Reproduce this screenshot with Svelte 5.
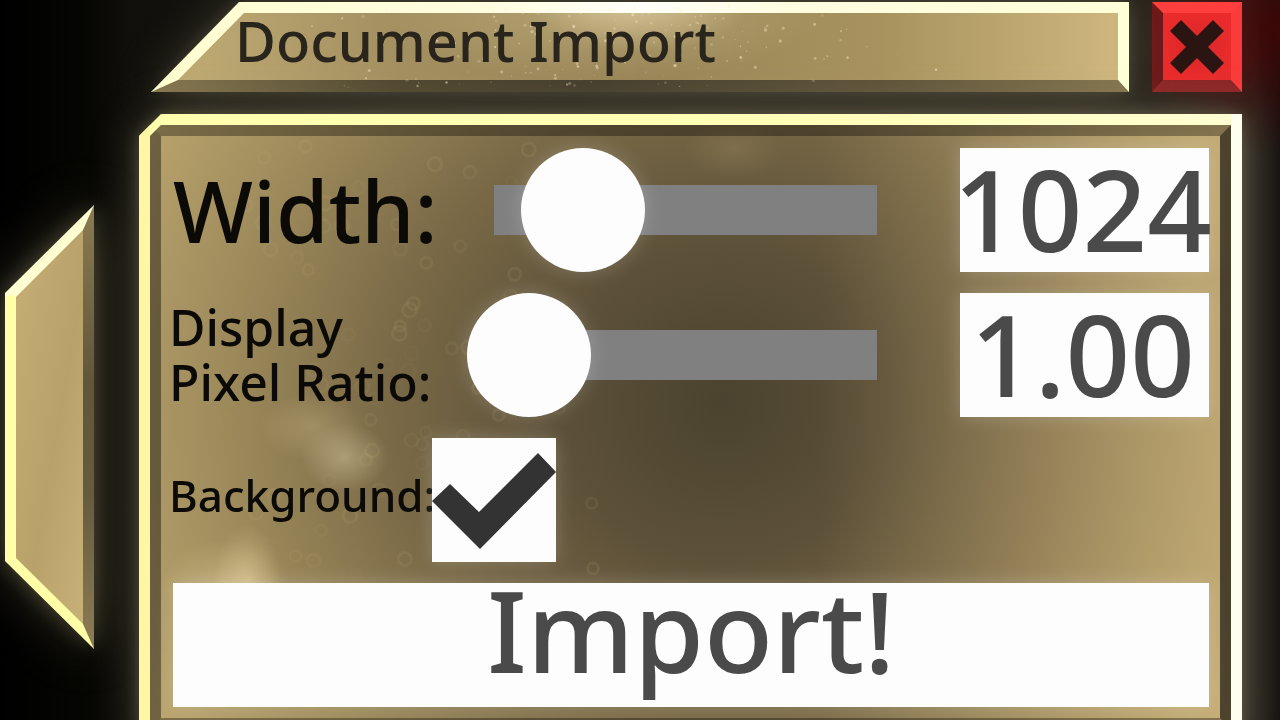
<script>
  let width = $state(1024);
  let ratio = $state(1);
  let background = $state(true);

  // Small repeatable random source, so that the texture is the same on each load.
  function scatter(seed, count, make) {
    let s = seed;
    const next = () => {
      s = (s * 16807) % 2147483647;
      return s / 2147483647;
    };
    return Array.from({ length: count }, () => make(next));
  }

  const sparks = scatter(4711, 170, (r) => ({
    x: 8 + (r() + r() + r()) * 26,
    y: 4 + r() * 92,
    size: 0.5 + r() * 1.2,
    alpha: 0.1 + r() * 0.45
  }));

  const rings = scatter(90210, 90, (r) => ({
    x: 1 + (r() + r()) * 22,
    y: 1 + r() * 92,
    size: 5 + r() * 2,
    alpha: 0.02 + r() * 0.07
  }));
</script>

<main class="stage">
  <button class="tab" type="button" aria-label="Previous panel">
    <span class="tab-shade"></span>
    <span class="tab-low"></span>
    <span class="tab-face"></span>
  </button>

  <div class="window">
    <header class="head">
      <div class="title-glow">
        <div class="title">
          <div class="title-shade"></div>
          <div class="title-face"></div>
          <svg class="sparks" aria-hidden="true">
            {#each sparks as p}
              <circle cx="{p.x}%" cy="{p.y}%" r={p.size} fill="#fff3cf" fill-opacity={p.alpha} />
            {/each}
          </svg>
          <h1>Document Import</h1>
        </div>
      </div>
      <button class="close" type="button" aria-label="Close">
        <svg viewBox="0 0 54 54" width="54" height="54" aria-hidden="true">
          <path d="M11 0 27 16 43 0 54 11 38 27 54 43 43 54 27 38 11 54 0 43 16 27 0 11Z" />
        </svg>
      </button>
    </header>

    <div class="panel-glow">
      <div class="panel">
        <div class="well">
          <svg class="rings" aria-hidden="true">
            {#each rings as p}
              <circle cx="{p.x}%" cy="{p.y}%" r={p.size} fill="none" stroke="#e6d49a" stroke-width="3" stroke-opacity={p.alpha} />
            {/each}
          </svg>
          <form class="form" onsubmit={(e) => e.preventDefault()}>
            <div class="row">
              <label class="large" for="width">Width:</label>
              <input id="width" class="slider" type="range" min="100" max="4096" bind:value={width} />
              <div class="value">
                <input type="text" aria-label="Width value" value={width} onchange={(e) => (width = Number(e.currentTarget.value) || width)} />
              </div>
            </div>
            <div class="row">
              <label class="medium" for="ratio">Display<br />Pixel Ratio:</label>
              <input id="ratio" class="slider" type="range" min="0.1" max="10" step="0.01" bind:value={ratio} />
              <div class="value">
                <input type="text" aria-label="Display pixel ratio value" value={ratio.toFixed(2)} onchange={(e) => (ratio = Number(e.currentTarget.value) || ratio)} />
              </div>
            </div>
            <div class="row">
              <label class="small" for="background">Background:</label>
              <div class="check">
                <input id="background" type="checkbox" bind:checked={background} />
                {#if background}
                  <svg viewBox="0 0 124 124" aria-hidden="true">
                    <path d="M0 63 18 46 47 74 106 15 124 34 48 111Z" />
                  </svg>
                {/if}
              </div>
            </div>
            <button class="submit" type="submit">Import!</button>
          </form>
        </div>
      </div>
    </div>
  </div>
</main>

<style>
  :global(body) {
    margin: 0;
    background: #000;
  }

  .stage {
    box-sizing: border-box;
    height: 100vh;
    overflow: auto;
    scrollbar-width: none;
    display: grid;
    grid-template-columns: 89px minmax(0, 1fr);
    align-items: start;
    column-gap: 45px;
    padding: 2px 38px 0 5px;
    font-family: "Noto Sans", sans-serif;
    font-weight: 500;
    background:
      radial-gradient(circle at 100% 4%, #3c0707 0, transparent 130px),
      linear-gradient(to right, #000 0, #060603 7%, #100f0b 10%, #1c1a15 30%, #25221c 90%, #2b2822 98%, #161310 100%);
  }

  button {
    font: inherit;
    border: 0;
    padding: 0;
    cursor: pointer;
  }

  /* Side tab */
  .tab {
    display: grid;
    height: 444px;
    margin-top: 203px;
    background: none;
    filter: drop-shadow(0 0 10px #c9bf8a44) drop-shadow(0 0 28px #c9bf8a44);
  }

  .tab > span {
    grid-area: 1 / 1;
  }

  .tab-shade {
    background: linear-gradient(to bottom, #ffffd2 0 90px, #ffffa8 91px);
    clip-path: polygon(0 88px, 100% 0, 100% 100%, 0 calc(100% - 88px));
  }

  .tab-low {
    background: linear-gradient(#8b7b52, #62563a 40%, #675b3e 65%, #8d7d54);
    clip-path: polygon(100% 0, 100% 100%, 78px calc(100% - 25px), 78px 25px);
  }

  .tab-face {
    background: linear-gradient(100deg, #c9b179, #b8a26a 55%, #cbb57b);
    clip-path: polygon(11px 92px, 78px 25px, 78px calc(100% - 25px), 11px calc(100% - 91px));
  }

  /* Title bar */
  .window {
    display: grid;
    row-gap: 22px;
  }

  .head {
    display: flex;
    gap: 23px;
    margin-left: 12px;
    height: 90px;
  }

  .title-glow {
    flex: 1;
    display: grid;
    filter: drop-shadow(0 0 8px #d8cf9c22) drop-shadow(0 0 24px #d8cf9c33);
  }

  .title {
    display: grid;
    grid-template-rows: 90px;
    background: linear-gradient(to right, #ffffd0, #fffce0 35%, #fffffa 50%, #fffde0 65%, #ffffd8);
    clip-path: polygon(88px 0, 100% 0, 100% 100%, 0 100%);
  }

  .title > * {
    grid-area: 1 / 1;
  }

  .title-shade {
    background: linear-gradient(to right, #857750, #50472f 25%, #453e2e 45%, #5f543a 75%, #83754f);
    clip-path: polygon(0 100%, 27px 78px, calc(100% - 11px) 78px, 100% 100%);
  }

  .title-face {
    background:
      radial-gradient(ellipse 110px 50px at 50% 0, #fff0c277, transparent),
      radial-gradient(ellipse 220px 70px at 46% 10%, #e7d7a455, transparent),
      linear-gradient(to right, #bda872 5%, #a39061 25%, #988557 50%, #a8935f 75%, #cdb57d 98%);
    clip-path: polygon(93px 11px, calc(100% - 11px) 11px, calc(100% - 11px) 78px, 27px 78px);
  }

  .sparks,
  .rings {
    width: 100%;
    height: 100%;
    pointer-events: none;
  }

  /* The clipped faces form stacking contexts, so what lies on them needs a level. */
  .sparks,
  h1 {
    z-index: 1;
  }

  h1 {
    margin: 0;
    padding-left: 84px;
    font-size: 56px;
    font-weight: 500;
    line-height: 76px;
    color: #29251c;
    white-space: nowrap;
  }

  .close {
    box-sizing: border-box;
    display: grid;
    place-items: center;
    width: 90px;
    height: 90px;
    border: solid;
    border-width: 11px 11px 12px;
    border-color: #ff3e3e #fb3a3a #8a2626 #6b1717;
    background: radial-gradient(#d92727, #e92b2b 70%);
    box-shadow: 6px 0 28px #ff202022;
  }

  .close path {
    fill: #2a1512;
  }

  /* Panel */
  .panel-glow {
    display: grid;
    filter: drop-shadow(0 0 8px #d8cf9c44) drop-shadow(0 0 24px #d8cf9c33);
  }

  .panel {
    display: grid;
    padding: 11px;
    background:
      linear-gradient(to left, #fffff0 0 11px, transparent 11px),
      linear-gradient(to right, #fff6a4 0 11px, transparent 11px),
      linear-gradient(to right, #ffffae, #ffffb8 60%, #ffffd2);
    clip-path: polygon(22px 0, 100% 0, 100% 100%, 0 100%, 0 22px);
  }

  .well {
    display: grid;
    border: 11px solid;
    border-color: #0005 #0000009c #0005 #0006;
    clip-path: polygon(11px 0, 100% 0, 100% 100%, 0 100%, 0 11px);
    background:
      radial-gradient(ellipse 44px 34px at 18% 55%, #dccda677, transparent),
      radial-gradient(ellipse 54px 34px at 15% 50%, #cdbb8a55, transparent),
      radial-gradient(ellipse 34px 60px at 9% 76%, #f0dba677, transparent),
      radial-gradient(ellipse 64px 44px at 7% 76%, #f0dba655, transparent),
      radial-gradient(ellipse 50px 30px at 54% 4%, #b9a67833, transparent),
      linear-gradient(to right, transparent 62%, #d8be8488 100%),
      radial-gradient(ellipse 54% 90% at 53% 46%, #4b432f 0, #5c5038 28%, #7a6a47 58%, #9d8a5b 85%, #bba56e 112%);
    background-origin: border-box;
  }

  .well > * {
    grid-area: 1 / 1;
  }

  .form {
    display: grid;
    row-gap: 21px;
    padding: 12px 11px 11px 12px;
  }

  .row {
    display: grid;
    grid-template-columns: 259px minmax(0, 1fr) 249px;
    align-items: center;
    height: 124px;
  }

  label {
    color: #0b0a07;
    white-space: nowrap;
  }

  .large {
    font-size: 85px;
    line-height: 116px;
  }

  .medium {
    margin-left: -4px;
    font-size: 50px;
    line-height: 55px;
  }

  .small {
    margin-left: -4px;
    padding-bottom: 10px;
    font-size: 44px;
    line-height: 55px;
  }

  .slider {
    appearance: none;
    height: 124px;
    margin: 0 21px 0 0;
    cursor: pointer;
    background: linear-gradient(#808080, #808080) center / calc(100% - 124px) 50px no-repeat;
  }

  .slider::-webkit-slider-thumb {
    appearance: none;
    width: 124px;
    height: 124px;
    border-radius: 50%;
    background: #fdfdfd;
    box-shadow: 0 0 20px #fff3;
  }

  .value {
    display: grid;
    height: 124px;
    background: #fdfdfd;
    box-shadow: 0 0 18px #fff3;
  }

  .value input {
    min-width: 0;
    margin: 0 -12px 0 -16px;
    padding: 0 0 4px;
    border: 0;
    background: none;
    font: inherit;
    font-size: 113px;
    line-height: 120px;
    text-align: center;
    color: #4a4a4a;
  }

  .check {
    display: grid;
    width: 124px;
    height: 124px;
    box-shadow: 0 0 18px #fff3;
  }

  .check > * {
    grid-area: 1 / 1;
  }

  .check input {
    appearance: none;
    margin: 0;
    background: #fdfdfd;
    cursor: pointer;
  }

  .check svg {
    pointer-events: none;
  }

  .check path {
    fill: #333;
  }

  .submit {
    box-sizing: border-box;
    height: 124px;
    padding-bottom: 32px;
    background: #fdfdfd;
    font-size: 113px;
    line-height: 92px;
    color: #4a4a4a;
    box-shadow: 0 0 18px #fff3;
  }
</style>
